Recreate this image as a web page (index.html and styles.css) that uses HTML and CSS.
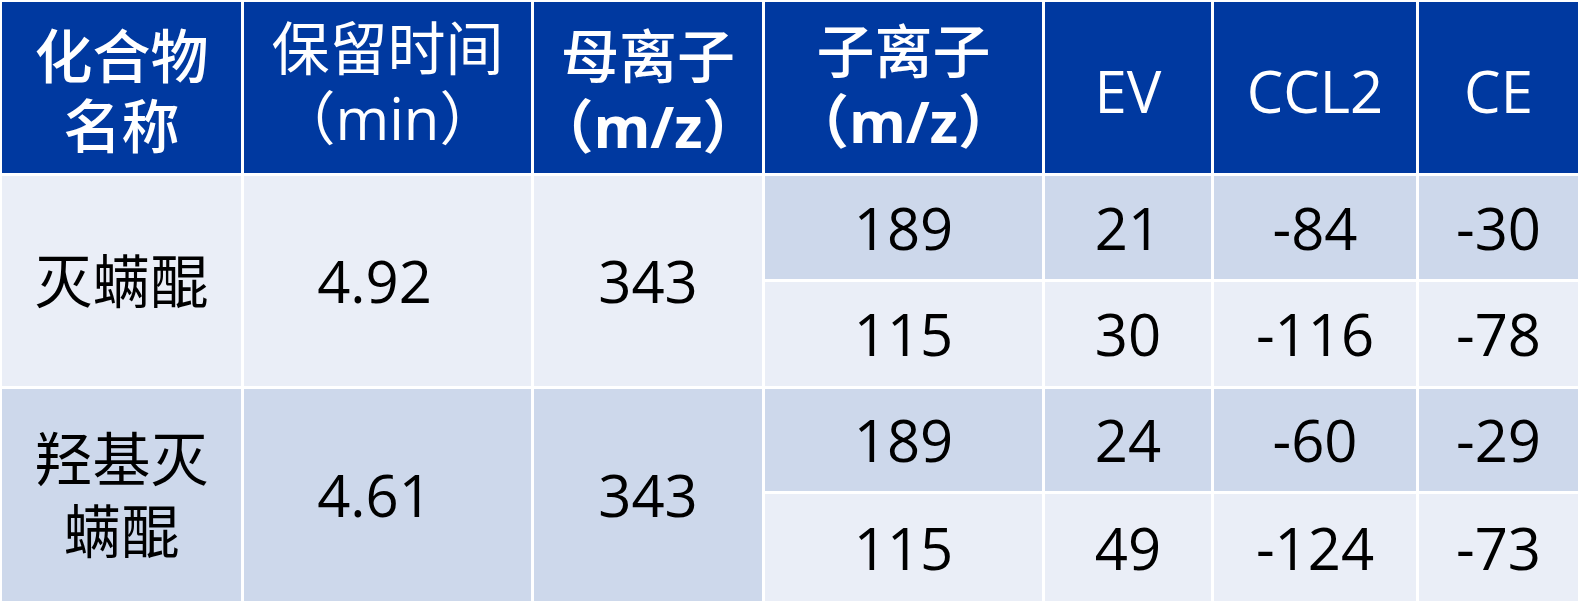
FILE: index.html
```html
<!DOCTYPE html>
<html lang="zh">
<head>
<meta charset="utf-8">
<title>表</title>
<link rel="stylesheet" href="styles.css">
</head>
<body>
<div class="table">
  <div class="cell head b"><div class="lines"><span class="ln">化合物</span><span class="ln">名称</span></div></div>
  <div class="cell head up"><div class="lines"><span class="ln">保留时间</span><span class="ln">（min）</span></div></div>
  <div class="cell head b"><div class="lines"><span class="ln">母离子</span><span class="ln unit">（m/z）</span></div></div>
  <div class="cell head b up2"><div class="lines"><span class="ln">子离子</span><span class="ln unit">（m/z）</span></div></div>
  <div class="cell head">EV</div>
  <div class="cell head">CCL2</div>
  <div class="cell head">CE</div>

  <div class="cell light span2">灭螨醌</div>
  <div class="cell light span2 sh">4.92</div>
  <div class="cell light span2">343</div>
  <div class="cell dark">189</div>
  <div class="cell dark">21</div>
  <div class="cell dark">-84</div>
  <div class="cell dark">-30</div>
  <div class="cell light">115</div>
  <div class="cell light">30</div>
  <div class="cell light">-116</div>
  <div class="cell light">-78</div>

  <div class="cell dark span2"><div class="lines"><span class="ln two">羟基灭</span><span class="ln two">螨醌</span></div></div>
  <div class="cell dark span2 sh">4.61</div>
  <div class="cell dark span2">343</div>
  <div class="cell dark">189</div>
  <div class="cell dark">24</div>
  <div class="cell dark">-60</div>
  <div class="cell dark">-29</div>
  <div class="cell light">115</div>
  <div class="cell light">49</div>
  <div class="cell light">-124</div>
  <div class="cell light">-73</div>
</div>
</body>
</html>
```
FILE: styles.css
```css
html, body {
  margin: 0;
  padding: 0;
  background: #ffffff;
}
body {
  padding: 2px 2px 0 2px;
  width: 1580px;
  height: 602px;
  box-sizing: border-box;
  overflow: hidden;
  font-family: "Open Sans", "Noto Sans CJK SC", sans-serif;
}
.table {
  display: grid;
  grid-template-columns: 239px 287px 228px 277px 166px 202px 159px;
  grid-template-rows: 171px 103px 104px 102px 107px;
  gap: 3px;
}
.cell {
  display: flex;
  align-items: center;
  justify-content: center;
  text-align: center;
  font-size: 58px;
  line-height: 70px;
  color: #000000;
}
.lines {
  display: flex;
  flex-direction: column;
  align-items: center;
}
.ln {
  display: block;
  height: 70px;
  line-height: 70px;
  white-space: nowrap;
}
.ln.two {
  height: 72px;
  line-height: 72px;
}
.ln.unit {
  font-weight: 700;
}
.head {
  background: #0039a0;
  color: #ffffff;
  padding-top: 6px;
}
.head.up {
  padding-top: 0;
  padding-bottom: 10px;
}
.head.up2 {
  padding-top: 0;
  padding-bottom: 4px;
}
.b {
  font-weight: 500;
}
.sh {
  padding-right: 26px;
}
.light {
  background: #eaeef7;
}
.dark {
  background: #cdd8eb;
}
.span2 {
  grid-row: span 2;
}
```
